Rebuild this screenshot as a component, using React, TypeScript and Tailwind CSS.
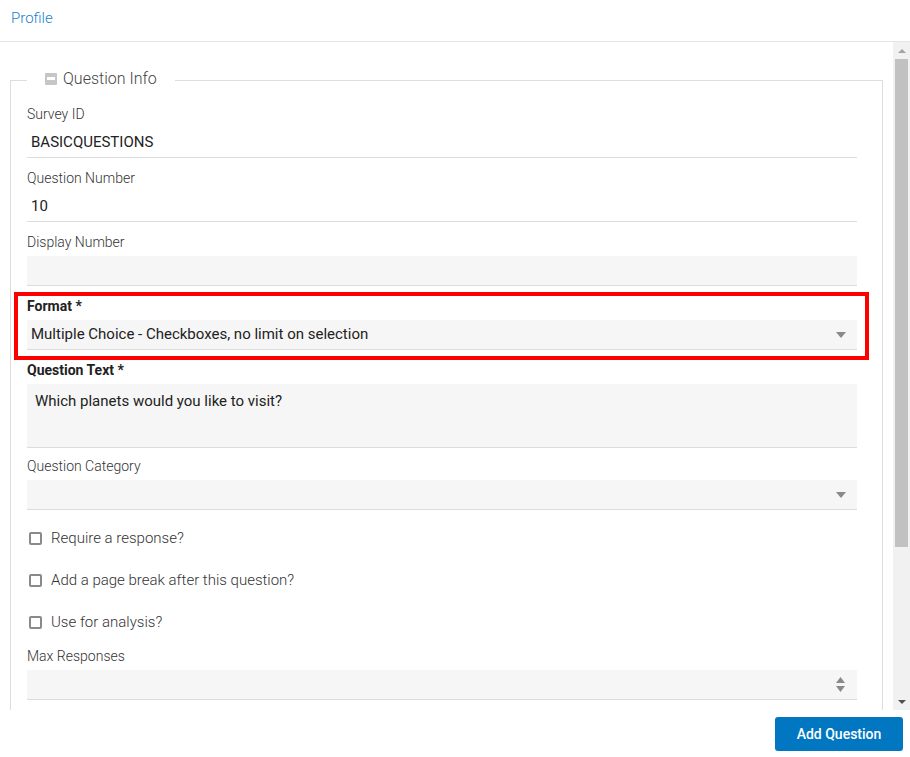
import React from "react";

function Label({ text, bold }: { text: string; bold?: boolean }) {
  return (
    <div
      className={
        bold
          ? "text-[14px] leading-[16px] mb-[6px] font-bold text-[#222]"
          : "text-[14px] leading-[16px] mb-[6px] font-light text-[#333]"
      }
    >
      {text}
    </div>
  );
}

function Caret() {
  return (
    <svg width="10" height="6" viewBox="0 0 10 6" className="block">
      <path d="M0 0 L10 0 L5 6 Z" fill="#8a8a8a" />
    </svg>
  );
}

function Checkbox({ text }: { text: string }) {
  return (
    <div className="h-[20px] flex items-center">
      <span className="ml-[2px] w-[13px] h-[13px] border-2 border-[#8a8a8a] rounded-[2px] bg-white box-border" />
      <span className="ml-[9px] text-[15px] font-light text-[#333] leading-[20px]">{text}</span>
    </div>
  );
}

export default function App() {
  return (
    <div className="w-[910px] h-[757px] flex flex-col bg-white font-['Roboto',sans-serif] overflow-hidden">
      <header className="h-[42px] shrink-0 border-b border-[#e6e6e6] flex items-center px-[11px]">
        <span className="text-[15px] font-light text-[#1e7fd0] leading-[20px] -mt-[6px]">Profile</span>
      </header>
      <div className="flex h-[668px] shrink-0">
        <main className="flex-1 overflow-hidden pl-[10px] pr-[10px] pt-[28px]">
          <fieldset className="border border-[#dedede] m-0 p-0 pl-[16px] pr-[25px] pb-[40px] min-w-0">
            <legend className="px-[18px] h-[20px] pb-[3px] box-border flex items-center">
              <span className="w-[12px] h-[12px] bg-[#c6c6c6] rounded-[1px] flex items-center justify-center">
                <span className="w-[8px] h-[3px] bg-white" />
              </span>
              <span className="ml-[6px] text-[16px] font-light text-[#444] leading-[20px]">Question Info</span>
            </legend>
            <div className="pt-[16px]">
              <div className="mb-[12px]">
                <Label text="Survey ID" />
                <div className="h-[30px] border-b border-[#dcdcdc] flex items-center pl-[4px] text-[15px] text-[#222]">
                  BASICQUESTIONS
                </div>
              </div>
              <div className="mb-[12px]">
                <Label text="Question Number" />
                <div className="h-[30px] border-b border-[#dcdcdc] flex items-center pl-[4px] text-[15px] text-[#222]">
                  10
                </div>
              </div>
              <div className="mb-[12px]">
                <Label text="Display Number" />
                <div className="h-[30px] border-b border-[#dcdcdc] bg-[#f6f6f6]" />
              </div>
              <div className="mb-[12px] relative">
                <Label text="Format *" bold />
                <div className="h-[30px] border-b border-[#dcdcdc] bg-[#f6f6f6] flex items-center justify-between pl-[4px] pr-[11px] text-[15px] text-[#222]">
                  <span>Multiple Choice - Checkboxes, no limit on selection</span>
                  <Caret />
                </div>
                <div className="absolute -top-[6px] -left-[13px] -right-[12px] -bottom-[10px] border-4 border-[#ff0000] pointer-events-none" />
              </div>
              <div className="mb-[10px]">
                <Label text="Question Text *" bold />
                <div className="h-[64px] border-b border-[#dcdcdc] bg-[#f6f6f6] pl-[8px] pt-[7px] text-[15px] text-[#222] leading-[20px]">
                  Which planets would you like to visit?
                </div>
              </div>
              <div>
                <Label text="Question Category" />
                <div className="h-[30px] border-b border-[#dcdcdc] bg-[#f6f6f6] flex items-center justify-end pr-[11px]">
                  <Caret />
                </div>
              </div>
              <div className="mt-[18px] flex flex-col gap-[22px]">
                <Checkbox text="Require a response?" />
                <Checkbox text="Add a page break after this question?" />
                <Checkbox text="Use for analysis?" />
              </div>
              <div className="mt-[16px]">
                <Label text="Max Responses" />
                <div className="h-[30px] border-b border-[#dcdcdc] bg-[#f6f6f6] flex items-center justify-end pr-[12px]">
                  <div className="flex flex-col gap-[3px]">
                    <svg width="9" height="6" viewBox="0 0 9 6" className="block">
                      <path d="M0 6 L9 6 L4.5 0 Z" fill="#8a8a8a" />
                    </svg>
                    <svg width="9" height="6" viewBox="0 0 9 6" className="block">
                      <path d="M0 0 L9 0 L4.5 6 Z" fill="#8a8a8a" />
                    </svg>
                  </div>
                </div>
              </div>
              <div className="h-[60px]" />
            </div>
          </fieldset>
        </main>
        <div className="w-[17px] bg-[#f1f1f1] flex flex-col">
          <div className="h-[17px] flex items-center justify-center">
            <svg width="8" height="4" viewBox="0 0 8 4" className="block">
              <path d="M0 4 L8 4 L4 0 Z" fill="#a3a3a3" />
            </svg>
          </div>
          <div className="h-[488px] mx-[2px] bg-[#c1c1c1]" />
          <div className="flex-1" />
          <div className="h-[17px] flex items-center justify-center">
            <svg width="8" height="4" viewBox="0 0 8 4" className="block">
              <path d="M0 0 L8 0 L4 4 Z" fill="#505050" />
            </svg>
          </div>
        </div>
      </div>
      <footer className="flex-1 flex justify-end items-start pt-[7px] pr-[7px]">
        <button className="w-[128px] h-[34px] rounded-[3px] bg-[#0077c0] text-white text-[14px] font-medium">
          Add Question
        </button>
      </footer>
    </div>
  );
}
